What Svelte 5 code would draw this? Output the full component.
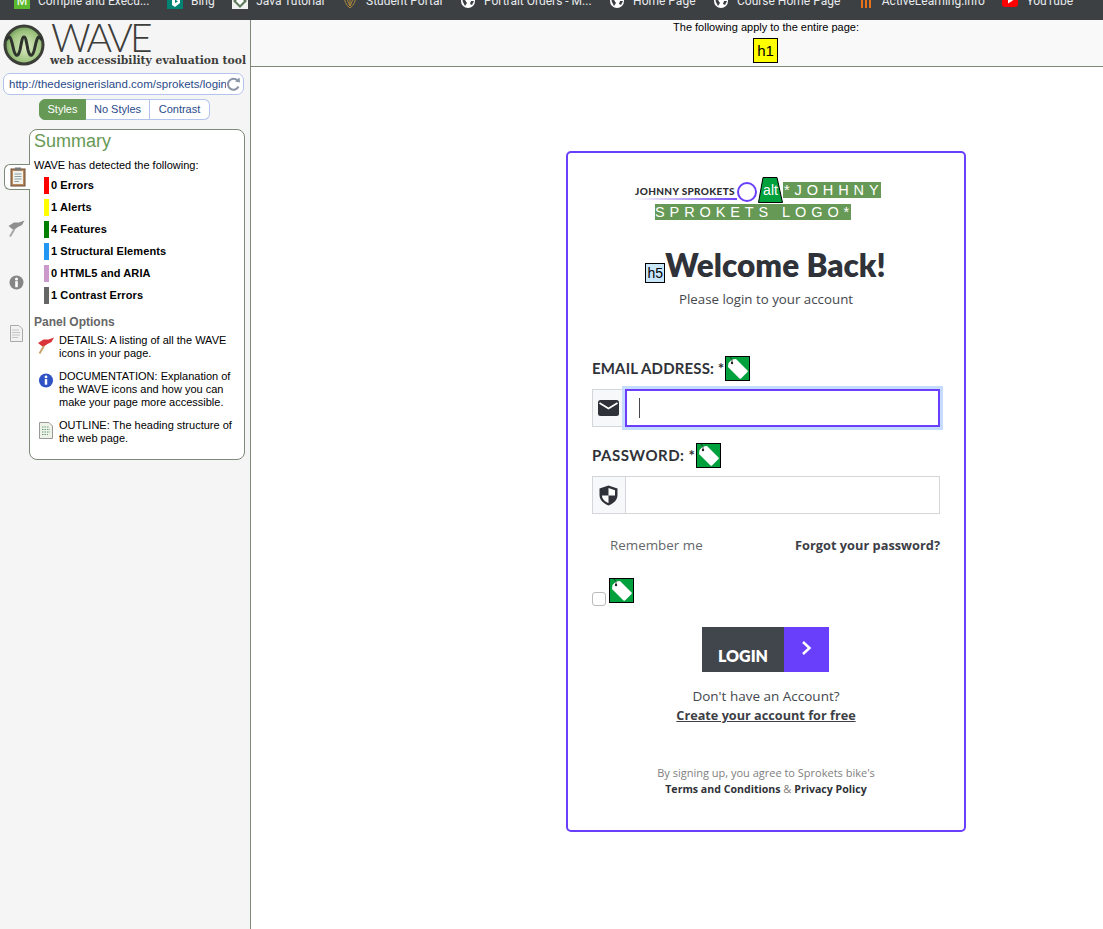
<script>
    const bookmarks = [
        { label: 'Compile and Execu...', icon: 'm' },
        { label: 'Bing', icon: 'bing' },
        { label: 'Java Tutorial', icon: 'java' },
        { label: 'Student Portal', icon: 'student' },
        { label: 'Portrait Orders - M...', icon: 'globe' },
        { label: 'Home Page', icon: 'globe' },
        { label: 'Course Home Page', icon: 'globe' },
        { label: 'ActiveLearning.info', icon: 'al' },
        { label: 'YouTube', icon: 'yt' }
    ];

    const summary = [
        { text: '0 Errors', color: '#ff0000' },
        { text: '1 Alerts', color: '#ffff00' },
        { text: '4 Features', color: '#008000' },
        { text: '1 Structural Elements', color: '#2196f3' },
        { text: '0 HTML5 and ARIA', color: '#cc99cc' },
        { text: '1 Contrast Errors', color: '#666666' }
    ];
</script>

{#snippet tag()}
    <svg class="tag" width="25" height="25" viewBox="0 0 25 25" aria-hidden="true">
        <rect x="0.5" y="0.5" width="24" height="24" fill="#00a13d" stroke="#000" />
        <path d="M7 3.5 L11 3 L22.5 14.5 Q23 15.5 22.5 16 L16 22.5 Q15 23 14.5 22.5 L3 11 L3.5 7 Z" fill="#fff" />
        <circle cx="7" cy="7" r="1.2" fill="#222" />
        <path d="M7 7 Q8 3 5 1" fill="none" stroke="#222" stroke-width="0.8" />
    </svg>
{/snippet}

<div class="bar">
    {#each bookmarks as b}
        <div class="bookmark">
            {#if b.icon === 'm'}
                <span class="bm-icon green">M</span>
            {:else if b.icon === 'bing'}
                <svg width="16" height="16" viewBox="0 0 16 16"><rect width="16" height="16" fill="#008373" /><path d="M5 1 L8 2 V10 L11 8.500 L9.500 7.500 L8.500 5.500 L13 7 V10 L8 14 L5 12 Z" fill="#fff" /></svg>
            {:else if b.icon === 'java'}
                <svg width="16" height="16" viewBox="0 0 16 16"><rect width="16" height="16" fill="#f1f1f1" /><path d="M8 1 L15 8 L8 15 L1 8 Z" fill="#5d7a5d" /><path d="M8 4 L12 8 L8 12 L4 8 Z" fill="#fff" /></svg>
            {:else if b.icon === 'student'}
                <svg width="16" height="16" viewBox="0 0 16 16" fill="none" stroke="#b08a3c" stroke-width="1"><path d="M2 1 Q2 11 8 15 Q14 11 14 1" /><path d="M5 1 Q5 9 8 13 Q11 9 11 1" /><path d="M8 1 V13" /></svg>
            {:else if b.icon === 'globe'}
                <svg width="16" height="16" viewBox="0 0 16 16"><circle cx="8" cy="8" r="7" fill="#fff" /><path d="M4 3 L9 3 L8 6 L5 7 L7 10 L5 13 L2.500 8 Z M11 8 L14 8 L12 12 L10 11 Z" fill="#3c4043" /></svg>
            {:else if b.icon === 'al'}
                <svg width="16" height="16" viewBox="0 0 16 16" fill="#e8711a"><rect x="3" y="3" width="2" height="12" /><rect x="7" y="3" width="2" height="12" /><rect x="11" y="3" width="2" height="12" /></svg>
            {:else}
                <svg width="16" height="16" viewBox="0 0 16 16"><rect y="1" width="16" height="13" rx="3" fill="#ff0000" /><path d="M6 4.500 L11 7.500 L6 10.500 Z" fill="#fff" /></svg>
            {/if}
            <span>{b.label}</span>
        </div>
    {/each}
</div>

<div class="layout">
    <aside class="wave">
        <div class="brand">
            <svg class="brand-logo" width="42" height="42" viewBox="0 0 42 42" aria-hidden="true">
                <defs>
                    <radialGradient id="orb" cx="0.55" cy="0.55" r="0.6">
                        <stop offset="0" stop-color="#dcebc4" />
                        <stop offset="0.7" stop-color="#9cc27c" />
                        <stop offset="1" stop-color="#5d8a4c" />
                    </radialGradient>
                </defs>
                <circle cx="21" cy="21" r="19" fill="url(#orb)" stroke="#3b3f38" stroke-width="3" />
                <path d="M3 16 C7 10 8 14 10 23 C12 33 15 34 17 26 C18.500 19 19 13 21 13 C23 13 23.500 19 25 26 C27 34 30 33 32 23 C34 14 35 10 39 16" fill="none" stroke="#2f332e" stroke-width="3" />
            </svg>
            <div class="brand-text">
                <div class="brand-name">WAVE</div>
                <div class="brand-sub">web accessibility evaluation tool</div>
            </div>
        </div>

        <div class="url">
            <span class="url-text">http://thedesignerisland.com/sprokets/login</span>
            <svg width="15" height="15" viewBox="0 0 15 15" aria-hidden="true"><path d="M12.500 9.500 A5.500 5.500 0 1 1 11.500 3.500" fill="none" stroke="#8a94a6" stroke-width="2" /><path d="M9 4.500 L14 5.500 L13.500 0.500 Z" fill="#8a94a6" /></svg>
        </div>

        <div class="modes">
            <span class="mode on">Styles</span>
            <span class="mode mid">No Styles</span>
            <span class="mode last">Contrast</span>
        </div>

        <div class="tool">
            <div class="rail">
                <div class="rail-tab">
                    <svg width="16" height="20" viewBox="0 0 16 20" aria-hidden="true">
                        <rect x="1" y="2" width="14" height="17" fill="#b98a5e" stroke="#6b4a30" />
                        <rect x="3" y="4" width="10" height="13" fill="#f2f2ea" />
                        <rect x="5" y="0.500" width="6" height="3" fill="#777" />
                        <path d="M4.500 7 H11.500 M4.500 9.500 H11.500 M4.500 12 H11.500 M4.500 14.500 H9" stroke="#8aa0a8" />
                    </svg>
                </div>
                <svg class="rail-flag" width="17" height="17" viewBox="0 0 17 17" aria-hidden="true">
                    <path d="M0.500 6 L6 2.500 L11 2.500 L16.500 0.500 L14 5 L10 7 L5.500 10 Z" fill="#8f8f8f" />
                    <path d="M6.500 9 L2 16.500" stroke="#a8a8a8" stroke-width="2" />
                </svg>
                <svg class="rail-info" width="15" height="15" viewBox="0 0 15 15" aria-hidden="true">
                    <circle cx="7.500" cy="7.500" r="7" fill="#868686" />
                    <rect x="6.200" y="6.200" width="2.600" height="6" fill="#fff" />
                    <circle cx="7.500" cy="4" r="1.500" fill="#fff" />
                </svg>
                <svg class="rail-doc" width="13" height="17" viewBox="0 0 13 17" aria-hidden="true">
                    <path d="M0.500 0.500 H9 L12.500 4 V16.500 H0.500 Z" fill="#f2f2f2" stroke="#aaa" />
                    <path d="M2.500 5 H9 M2.500 7.500 H10 M2.500 10 H10 M2.500 12.500 H8" stroke="#999" stroke-dasharray="1 1" />
                </svg>
            </div>

            <section class="panel">
                <h2>Summary</h2>
                <p class="detected">WAVE has detected the following:</p>
                <ul class="counts">
                    {#each summary as s}
                        <li><span class="swatch" style="background: {s.color}"></span>{s.text}</li>
                    {/each}
                </ul>
                <h3>Panel Options</h3>
                <div class="option">
                    <svg width="17" height="17" viewBox="0 0 17 17" aria-hidden="true">
                        <path d="M0.500 6 L6 2.500 L11 2.500 L16.500 0.500 L14 5 L10 7 L5.500 10 Z" fill="#d9343a" />
                        <path d="M6.500 9 L2 16.500" stroke="#c9a46a" stroke-width="2" />
                    </svg>
                    <p>DETAILS: A listing of all the WAVE icons in your page.</p>
                </div>
                <div class="option">
                    <svg width="15" height="15" viewBox="0 0 16 16" aria-hidden="true">
                        <circle cx="8" cy="8" r="7.500" fill="#2f53c4" />
                        <rect x="6.700" y="6.500" width="2.600" height="6" fill="#fff" />
                        <circle cx="8" cy="4.200" r="1.500" fill="#fff" />
                    </svg>
                    <p>DOCUMENTATION: Explanation of the WAVE icons and how you can make your page more accessible.</p>
                </div>
                <div class="option">
                    <svg width="14" height="17" viewBox="0 0 14 17" aria-hidden="true">
                        <path d="M0.500 0.500 H10 L13.500 4 V16.500 H0.500 Z" fill="#eef3e8" stroke="#999" />
                        <path d="M3 5 H10 M3 7.500 H11 M3 10 H11 M3 12.500 H9" stroke="#6a9a7a" stroke-dasharray="1.500 1" />
                    </svg>
                    <p>OUTLINE: The heading structure of the web page.</p>
                </div>
            </section>
        </div>
    </aside>

    <main class="main">
        <div class="viewport">
            <header class="page-note">
                <div>The following apply to the entire page:</div>
                <span class="h1-badge">h1</span>
            </header>

            <form class="card">
                <div class="logo">
                    <div class="logo-row">
                        <span class="logo-name">JOHNNY SPROKETS</span>
                        <span class="logo-ring"></span>
                        <span class="alt-badge"><svg width="25" height="26" viewBox="0 0 25 26" aria-hidden="true"><path d="M5 0.500 H19 L24.500 25.500 H0.500 Z" fill="#00a13d" stroke="#000" /></svg><span>alt</span></span>
                        <span class="alt-text first">*JOHHNY</span>
                    </div>
                    <span class="alt-text second">SPROKETS LOGO*</span>
                </div>

                <h1><span class="h5-badge">h5</span>Welcome Back!</h1>
                <p class="lead">Please login to your account</p>

                <label class="field-label email-label">EMAIL ADDRESS: *{@render tag()}</label>
                <div class="group">
                    <span class="addon">
                        <svg width="21" height="16" viewBox="0 0 21 16" aria-hidden="true">
                            <rect width="21" height="16" rx="2.500" fill="#2f3238" />
                            <path d="M1.500 3 L10.500 8.500 L19.500 3" fill="none" stroke="#fff" stroke-width="1.600" />
                        </svg>
                    </span>
                    <div class="input focused"><span class="caret"></span></div>
                </div>

                <label class="field-label pass-label">PASSWORD: *{@render tag()}</label>
                <div class="group">
                    <span class="addon">
                        <svg width="19" height="21" viewBox="0 0 19 21" aria-hidden="true">
                            <path d="M9.500 0.500 L18.500 3.500 V10 C18.500 15 14.500 18.500 9.500 20.500 C4.500 18.500 0.500 15 0.500 10 V3.500 Z" fill="#2f3238" />
                            <path d="M9.500 3 L16 5.200 V10.500 H9.500 Z M9.500 10.500 V18 C6 16.500 3 14 3 10.500 Z" fill="#fff" />
                        </svg>
                    </span>
                    <div class="input"></div>
                </div>

                <div class="remember">
                    <span class="remember-text">Remember me</span>
                    <span class="forgot">Forgot your password?</span>
                </div>

                <div class="check-row">
                    <span class="checkbox"></span>
                    {@render tag()}
                </div>

                <div class="login">
                    <span class="login-text">LOGIN</span>
                    <span class="login-arrow">
                        <svg width="11" height="16" viewBox="0 0 11 16" aria-hidden="true"><path d="M2 2 L8.500 8 L2 14" fill="none" stroke="#fff" stroke-width="2.500" /></svg>
                    </span>
                </div>

                <p class="account">Don't have an Account?</p>
                <p class="create">Create your account for free</p>

                <p class="terms">By signing up, you agree to Sprokets bike's<br /><b>Terms and Conditions</b> &amp; <b>Privacy Policy</b></p>
            </form>
        </div>
    </main>
</div>

<style>
    :global(body) {
        margin: 0;
        overflow: hidden;
        background: #fff;
        font-family: "Liberation Sans", Arial, sans-serif;
    }

    p, h1, h2, h3, ul {
        margin: 0;
        padding: 0;
    }

    /* browser bookmarks, cut off at the top of the shot */
    .bar {
        height: 20px;
        background: #3c4043;
        overflow: hidden;
        display: flex;
        align-items: flex-end;
        padding: 0 0 11px 14px;
        box-sizing: border-box;
        gap: 17.500px;
    }
    .bookmark {
        display: flex;
        align-items: center;
        gap: 8px;
        color: #e8eaed;
        font: 12px/16px Roboto, sans-serif;
        white-space: nowrap;
        flex: none;
    }
    .bm-icon {
        width: 16px;
        height: 16px;
        display: block;
        text-align: center;
        color: #fff;
        background: #5cb82e;
    }

    .layout {
        display: flex;
        height: 909px;
    }

    .wave {
        width: 250px;
        flex: none;
        background: #f5f5f5;
        border-right: 1px solid #7d8a78;
        font-size: 11px;
        color: #000;
    }
    .brand {
        display: flex;
        padding: 4px 0 0 3px;
        height: 49px;
        box-sizing: border-box;
    }
    .brand-logo {
        flex: none;
    }
    .brand-text {
        margin-left: 5px;
    }
    .brand-name {
        font: 300 39px/31px Lato, sans-serif;
        letter-spacing: -2.800px;
        color: #3d3d3a;
        margin: -2px 0 2px 1px;
    }
    .brand-sub {
        font: bold 10.800px/11px "DejaVu Serif", serif;
        color: #3d3d3a;
        white-space: nowrap;
    }
    .url {
        margin: 4px 6px 0 3px;
        height: 22px;
        box-sizing: border-box;
        border: 1px solid #b3c3ec;
        border-radius: 7px;
        background: #fff;
        display: flex;
        align-items: center;
        padding: 0 2px 0 5px;
        color: #2a4a8a;
        font-size: 11.500px;
    }
    .url-text {
        overflow: hidden;
        white-space: nowrap;
        flex: 1;
    }
    .modes {
        display: flex;
        margin: 4px 0 0 39px;
        height: 21px;
        line-height: 19px;
        text-align: center;
    }
    .mode {
        box-sizing: border-box;
        background: #fff;
        color: #2a4a8a;
        border: 1px solid #b3c3ec;
        border-left: 0;
    }
    .on {
        width: 47px;
        background: #669955;
        color: #fff;
        border: 1px solid #669955;
        border-radius: 6px 0 0 6px;
    }
    .mid {
        width: 64px;
    }
    .last {
        width: 60px;
        border-radius: 0 6px 6px 0;
    }

    .tool {
        display: flex;
        margin-top: 9px;
        align-items: flex-start;
    }
    .rail {
        width: 29px;
        flex: none;
        position: relative;
        z-index: 1;
        display: flex;
        flex-direction: column;
        align-items: center;
        padding-top: 35px;
    }
    .rail-tab {
        box-sizing: border-box;
        width: 26px;
        height: 26px;
        margin-left: 4px;
        margin-right: -1px;
        background: #fff;
        border: 1px solid #7d8a78;
        border-right: 0;
        border-radius: 6px 0 0 6px;
        display: flex;
        align-items: center;
        justify-content: center;
        align-self: flex-start;
    }
    .rail-flag {
        margin: 30px 0 0 4px;
    }
    .rail-info {
        margin: 38px 0 0 4px;
    }
    .rail-doc {
        margin: 35px 0 0 4px;
    }

    .panel {
        width: 216px;
        height: 331px;
        box-sizing: border-box;
        background: #fff;
        border: 1px solid #7d8a78;
        border-radius: 8px;
        padding: 0 4px;
    }
    h2 {
        font-size: 18px;
        font-weight: normal;
        line-height: 22px;
        color: #669955;
    }
    .detected {
        margin-top: 5px;
        line-height: 16px;
    }
    .counts {
        list-style: none;
        margin: 1px 0 0 10px;
    }
    .counts li {
        display: flex;
        align-items: center;
        height: 22px;
        font-weight: bold;
        letter-spacing: 0.100px;
    }
    .swatch {
        width: 5px;
        height: 17px;
        margin-right: 2px;
    }
    h3 {
        margin-top: 8px;
        font-size: 12px;
        line-height: 16px;
        color: #666;
    }
    .option {
        display: flex;
        margin-bottom: 10px;
        line-height: 13px;
        align-items: flex-start;
    }
    .option svg {
        width: 18px;
        flex: none;
        margin: 3px 4px 0 3px;
    }
    .panel h3 + .option {
        margin-top: 4px;
    }

    .main {
        flex: 1;
        overflow: hidden;
        min-width: 0;
    }
    .viewport {
        width: 1030px;
    }
    .page-note {
        height: 47px;
        box-sizing: border-box;
        background: #f9f9f9;
        border-bottom: 1px solid #7d8a78;
        text-align: center;
        font-size: 11px;
        color: #000;
        padding-top: 1px;
        line-height: 12px;
    }
    .h1-badge {
        display: block;
        width: 25px;
        height: 25px;
        box-sizing: border-box;
        margin: 5px 0 0 502px;
        background: #ffff00;
        border: 1px solid #000;
        font-size: 15px;
        line-height: 23px;
    }

    .card {
        display: block;
        width: 400px;
        height: 681px;
        box-sizing: border-box;
        margin: 84px auto 0;
        border: 2px solid #6a3ffb;
        border-radius: 5px;
        padding: 24px;
        background: #fff;
        font-family: "Open Sans", sans-serif;
        color: #45484e;
    }

    .logo {
        height: 70px;
        display: flex;
        flex-direction: column;
        align-items: center;
    }
    .logo-row {
        display: flex;
        align-items: flex-start;
        height: 27px;
        white-space: nowrap;
        margin-right: 16px;
    }
    .logo-name {
        font: 900 10px/12px Lato, sans-serif;
        letter-spacing: 0.350px;
        color: #2d2f33;
        margin-top: 8px;
        padding-bottom: 3px;
        width: 102px;
        background: linear-gradient(90deg, #ffffff, #6a3ffb) bottom / 100% 2px no-repeat;
    }
    .logo-ring {
        width: 20px;
        height: 20px;
        box-sizing: border-box;
        border: 2.500px solid #6a3ffb;
        border-radius: 50%;
        margin: 5px 0 0 0;
    }
    .alt-badge {
        display: block;
        position: relative;
        width: 25px;
        height: 26px;
        margin-left: 1px;
    }
    .alt-badge svg {
        display: block;
    }
    .alt-badge span {
        position: absolute;
        left: 0;
        right: 0;
        top: 6px;
        text-align: center;
        color: #fff;
        font: 14px/14px "Liberation Sans", sans-serif;
    }
    .alt-text {
        background: #669955;
        color: #fff;
        font: 14.500px/16px "Liberation Sans", sans-serif;
        letter-spacing: 4.900px;
        white-space: nowrap;
        height: 16px;
    }
    .first {
        margin: 5px 0 0 0;
        padding-left: 1px;
        width: 98px;
        box-sizing: border-box;
        overflow: hidden;
    }
    .second {
        width: 196px;
        overflow: hidden;
        margin-right: 26px;
    }

    h1 {
        font: 800 31.500px/36px Lato, sans-serif;
        color: #2f3238;
        display: flex;
        align-items: flex-end;
        justify-content: center;
        height: 36px;
        margin-left: -1px;
    }
    .h5-badge {
        box-sizing: border-box;
        width: 20px;
        height: 20px;
        background: #c9e6fb;
        border: 1px solid #000;
        font: 14px/18px "Liberation Sans", sans-serif;
        text-align: center;
        color: #000;
    }
    .lead {
        margin-top: 6px;
        text-align: center;
        font-size: 13.300px;
        line-height: 20px;
    }

    .field-label {
        display: flex;
        align-items: center;
        height: 25px;
        font: 700 15px/25px Lato, sans-serif;
        color: #2f3238;
        gap: 1px;
    }
    .email-label {
        margin-top: 47px;
        letter-spacing: 0.150px;
    }
    .pass-label {
        margin-top: 16px;
        letter-spacing: 0.500px;
    }
    .tag {
        display: block;
        flex: none;
    }
    .field-label .tag {
        margin-top: -1px;
    }

    .group {
        display: flex;
        height: 38px;
        margin-top: 8px;
    }
    .addon {
        width: 34px;
        flex: none;
        box-sizing: border-box;
        background: #f7f8fa;
        border: 1px solid #d5d6da;
        display: flex;
        align-items: center;
        justify-content: center;
        padding-right: 2px;
    }
    .input {
        flex: 1;
        box-sizing: border-box;
        border: 1px solid #d5d6da;
        border-left: 0;
        background: #fff;
    }
    .focused {
        border: 2px solid #6a3ffb;
        margin-left: -1px;
        box-shadow: 0 0 0 3px #c5dcff;
        display: flex;
        align-items: center;
        padding-left: 12px;
    }
    .caret {
        width: 1px;
        height: 20px;
        background: #45484e;
    }

    .remember {
        display: flex;
        justify-content: space-between;
        margin-top: 21px;
        padding-left: 18px;
        font-size: 13.400px;
        line-height: 20px;
    }
    .remember-text {
        color: #64676c;
    }
    .forgot {
        font-size: 12.800px;
        font-weight: 700;
        color: #3d4046;
    }

    .check-row {
        display: flex;
        align-items: flex-end;
        margin-top: 23px;
        gap: 3px;
        height: 28px;
    }
    .checkbox {
        box-sizing: border-box;
        width: 14px;
        height: 14px;
        border: 1px solid #bbb;
        border-radius: 3px;
        background: #fff;
    }
    .check-row .tag {
        margin-bottom: 3px;
    }

    .login {
        display: flex;
        width: 127px;
        height: 45px;
        margin: 21px 0 0 110px;
    }
    .login-text {
        width: 82px;
        background: #41454c;
        color: #fff;
        font: 800 16px/16px Lato, sans-serif;
        text-align: center;
        padding-top: 21px;
        box-sizing: border-box;
    }
    .login-arrow {
        width: 45px;
        background: #6a3ffb;
        display: flex;
        align-items: center;
        justify-content: center;
        padding-bottom: 3px;
        box-sizing: border-box;
    }

    .account {
        margin-top: 15px;
        text-align: center;
        font-size: 13.500px;
        line-height: 19px;
    }
    .create {
        text-align: center;
        font-size: 12.700px;
        font-weight: 700;
        line-height: 19px;
        text-decoration: underline;
        color: #3d4046;
    }
    .terms {
        margin-top: 40px;
        text-align: center;
        font-size: 11px;
        line-height: 16px;
        color: #808080;
    }
    .terms b {
        font-size: 10.600px;
        color: #2f3238;
    }
</style>
